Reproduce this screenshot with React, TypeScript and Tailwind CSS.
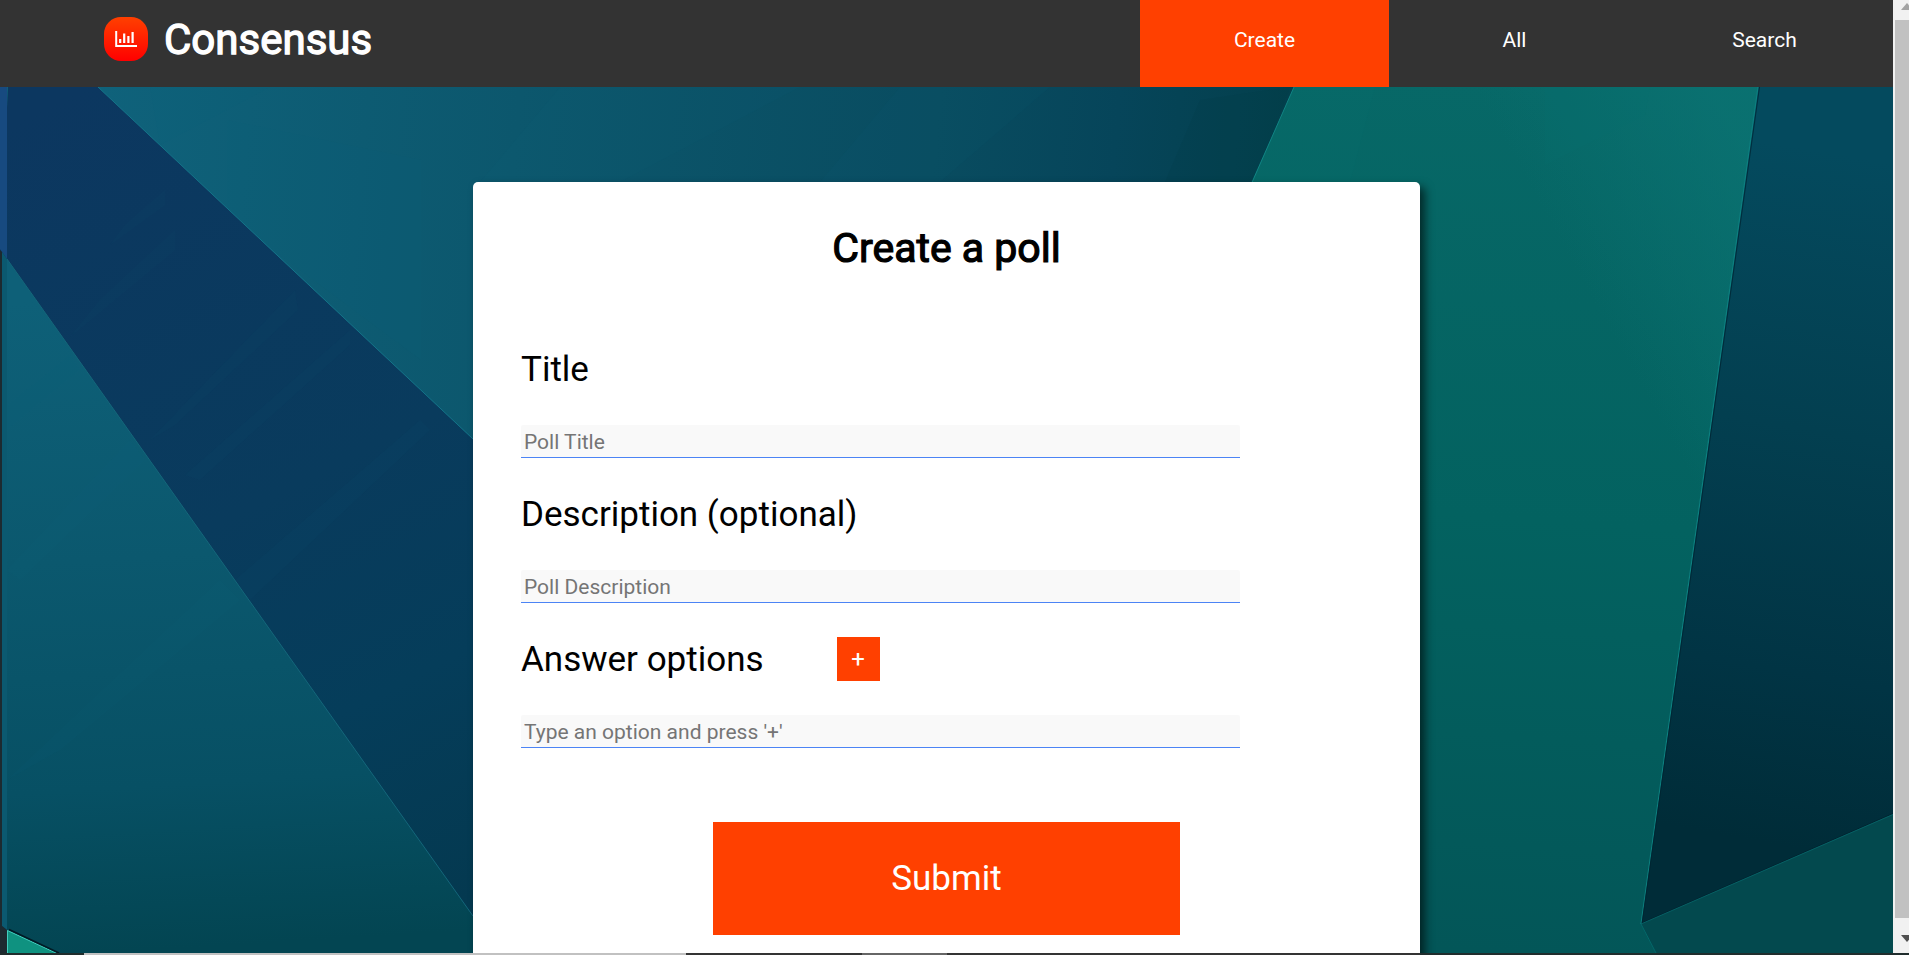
import React from "react";

function Backdrop() {
  return (
    <svg className="absolute inset-0 h-full w-full" viewBox="0 87 1893 866" preserveAspectRatio="none" aria-hidden="true">
      <defs>
        <linearGradient id="mid" gradientUnits="userSpaceOnUse" x1="100" y1="87" x2="1290" y2="200">
          <stop offset="0" stopColor="#0f627b" />
          <stop offset="0.35" stopColor="#0c576d" />
          <stop offset="0.7" stopColor="#094c60" />
          <stop offset="0.85" stopColor="#06455a" />
          <stop offset="1" stopColor="#033f4b" />
        </linearGradient>
        <linearGradient id="navy" gradientUnits="userSpaceOnUse" x1="60" y1="100" x2="470" y2="900">
          <stop offset="0" stopColor="#0c3760" />
          <stop offset="0.5" stopColor="#093b5d" />
          <stop offset="0.75" stopColor="#053d5a" />
          <stop offset="1" stopColor="#043950" />
        </linearGradient>
        <linearGradient id="left" gradientUnits="userSpaceOnUse" x1="60" y1="300" x2="100" y2="953">
          <stop offset="0" stopColor="#0e6078" />
          <stop offset="0.4" stopColor="#0b586e" />
          <stop offset="0.75" stopColor="#075064" />
          <stop offset="1" stopColor="#034552" />
        </linearGradient>
        <linearGradient id="green" gradientUnits="userSpaceOnUse" x1="1560" y1="87" x2="1500" y2="953">
          <stop offset="0" stopColor="#076867" />
          <stop offset="0.5" stopColor="#036260" />
          <stop offset="1" stopColor="#035658" />
        </linearGradient>
        <linearGradient id="sheen" gradientUnits="userSpaceOnUse" x1="1570" y1="260" x2="1750" y2="160">
          <stop offset="0" stopColor="#0b7474" stopOpacity="0" />
          <stop offset="1" stopColor="#0b7474" stopOpacity="0.7" />
        </linearGradient>
        <linearGradient id="right" gradientUnits="userSpaceOnUse" x1="1870" y1="160" x2="1750" y2="840">
          <stop offset="0" stopColor="#044a5e" />
          <stop offset="0.4" stopColor="#033f50" />
          <stop offset="0.75" stopColor="#013444" />
          <stop offset="1" stopColor="#002c38" />
        </linearGradient>
      </defs>
      <rect y="87" width="1893" height="866" fill="url(#mid)" />
      <g fill="#126a80" fillOpacity="0.08">
        <polygon points="150,87 270,87 160,145" />
        <polygon points="227,120 421,160 421,360 300,270 227,215" />
        <polygon points="560,87 800,87 620,182 480,182" />
        <polygon points="900,87 1050,87 940,182 820,182" />
      </g>
      <polygon points="1200,100 1290,87 1254,182 1165,182" fill="#023b44" fillOpacity="0.2" />
      <polygon points="8,87 98,87 473,439 473,953 0,953 0,250" fill="url(#navy)" />
      <g fill="#104a6b" fillOpacity="0.13">
        <polygon points="165,190 165,205 110,245 125,225" />
        <polygon points="175,230 175,250 70,337 100,300" />
        <polygon points="295,290 298,310 175,425 150,440" />
        <polygon points="350,330 350,345 200,480 185,475" />
        <polygon points="420,420 430,430 250,600 235,580" />
      </g>
      <polyline points="98,87 473,439" fill="none" stroke="#147489" />
      <polygon points="7,259 473,916 473,953 7,953" fill="url(#left)" />
      <g fill="#126a80" fillOpacity="0.08">
        <polygon points="70,355 80,370 7,430 7,405" />
        <polygon points="130,440 145,460 20,580 7,570" />
        <polygon points="220,580 240,600 60,750 7,780" />
      </g>
      <polyline points="7,259 473,916" fill="none" stroke="#14667a" />
      <polygon points="0,87 7,87 7,259 0,249" fill="#174a80" />
      <polygon points="2,252 7,259 7,930 2,926" fill="#0b5970" />
      <polygon points="0,250 2,252 2,926 7,930 7,953 0,953" fill="#1d2a30" />
      <polygon points="7,930 56,953 7,953" fill="#0f9280" />
      <path d="M7.500 953V930.500L56 953" fill="none" stroke="#43cdbd" />
      <path d="M9 929.500L59 953" fill="none" stroke="#021a24" strokeWidth="1.500" />
      <polygon points="1294,87 1758,87 1641,924 1656,953 1420,953 1200,300" fill="url(#green)" />
      <polygon points="1400,87 1758,87 1641,924 1500,924" fill="url(#sheen)" />
      <g fill="#0a7170" fillOpacity="0.14">
        <polygon points="1294,87 1375,87 1350,182 1251,182" />
        <polygon points="1545,87 1650,87 1645,115 1545,165" />
      </g>
      <polyline points="1294,87 1250,187" fill="none" stroke="#118484" />
      <polygon points="1758,87 1893,87 1893,815 1641,924" fill="url(#right)" />
      <polygon points="1641,924 1893,814 1893,953 1656,953" fill="#03494e" />
      <polyline points="1758,87 1641,924" fill="none" stroke="#0d8080" strokeWidth="1.200" />
      <polyline points="1759.500,87 1642,923 1893,813.500" fill="none" stroke="#00212d" strokeOpacity="0.7" />
      <polyline points="1641,924 1893,814.500" fill="none" stroke="#066064" />
      <polyline points="1641,924 1656,953" fill="none" stroke="#04686a" />
    </svg>
  );
}

function Logo() {
  return (
    <svg className="h-11 w-11 shrink-0" viewBox="0 0 44 44" aria-hidden="true">
      <defs>
        <linearGradient id="badge" x1="0" y1="0" x2="0" y2="1">
          <stop offset="0" stopColor="#ff4000" />
          <stop offset="1" stopColor="#ff0000" />
        </linearGradient>
      </defs>
      <rect width="44" height="44" rx="17" fill="url(#badge)" />
      <path d="M12.200 14V29H33" fill="none" stroke="#fff" strokeWidth="2" />
      <path d="M16.200 22V26M20.200 16.500V26M24.400 19V26M28.600 15V26" stroke="#fff" strokeWidth="2.200" />
    </svg>
  );
}

function NavItem({ label, active = false }: { label: string; active?: boolean }) {
  return (
    <a className={active ? "flex w-[249px] justify-center bg-[#ff4000] pt-[25px] text-[21px] leading-[30px]" : "flex w-[249px] justify-center pt-[25px] text-[21px] leading-[30px]"}>
      {label}
    </a>
  );
}

function Field({ label, placeholder, children }: { label: string; placeholder: string; children?: React.ReactNode }) {
  return (
    <div className="flex h-[145px] flex-col justify-between">
      <div className="flex h-[87px] items-center">
        <label className="mt-px text-[35px] leading-[44px]">{label}</label>
        {children}
      </div>
      <input
        className="mb-[13px] h-[33px] w-[719px] rounded-t-[2px] border-b border-[#4c84f5] bg-[#f9f9f9] px-[3px] pt-0.5 text-[21px] outline-none placeholder:text-[#757575]"
        placeholder={placeholder}
      />
    </div>
  );
}

export default function App() {
  return (
    <div className="flex h-[955px] w-[1909px] flex-col overflow-hidden font-[Roboto,sans-serif] text-black">
      <div className="flex h-[953px]">
        <div className="flex w-[1893px] flex-col">
          <header className="flex h-[87px] shrink-0 justify-between bg-[#333] text-white">
            <div className="flex h-[78px] items-center pl-[104px]">
              <Logo />
              <h1 className="ml-4 mt-0.5 text-[42px] leading-[50px] [-webkit-text-stroke:1.300px_white]">Consensus</h1>
            </div>
            <nav className="flex gap-px pr-1">
              <NavItem label="Create" active />
              <NavItem label="All" />
              <NavItem label="Search" />
            </nav>
          </header>
          <main className="relative flex grow justify-center overflow-hidden">
            <Backdrop />
            <section className="relative mt-[95px] h-[900px] w-[947px] rounded-t-[5px] bg-white px-12 shadow-[5px_5px_10px_rgba(0,0,0,0.6)]">
              <h2 className="mt-[42px] text-center text-[41px] leading-[48px] [-webkit-text-stroke:1.200px_black]">Create a poll</h2>
              <form className="mt-[54px] flex flex-col">
                <Field label="Title" placeholder="Poll Title" />
                <Field label="Description (optional)" placeholder="Poll Description" />
                <Field label="Answer options" placeholder="Type an option and press '+'">
                  <button type="button" className="mb-0.5 ml-[73px] h-11 w-[43px] bg-[#ff4000] text-2xl text-white">+</button>
                </Field>
                <button type="button" className="mt-[61px] h-[113px] w-[467px] self-center bg-[#ff4000] pt-0.5 text-[35px] text-white">Submit</button>
              </form>
            </section>
          </main>
        </div>
        <aside className="flex w-4 flex-col items-end overflow-hidden bg-[#f1f1f1]">
          <svg className="h-5 w-[14px] shrink-0" viewBox="0 0 14 20" aria-hidden="true">
            <path d="M6 10L12 3L18 10Z" fill="#a3a3a3" />
          </svg>
          <div className="h-[898px] w-[14px] shrink-0 bg-[#c1c1c1]" />
          <svg className="h-[35px] w-[14px] shrink-0" viewBox="0 0 14 35" aria-hidden="true">
            <path d="M6 17L12 24L18 17Z" fill="#505050" />
          </svg>
        </aside>
      </div>
      <div className="flex h-0.5 bg-[#343434]">
        <div className="w-[84px] bg-[#202d2d]" />
        <div className="w-[602px] bg-[#c1c1c1]" />
        <div className="w-[176px]" />
        <div className="w-[85px] bg-[#666]" />
        <div className="w-[473px]" />
        <div className="grow bg-[#202d2d]" />
      </div>
    </div>
  );
}
